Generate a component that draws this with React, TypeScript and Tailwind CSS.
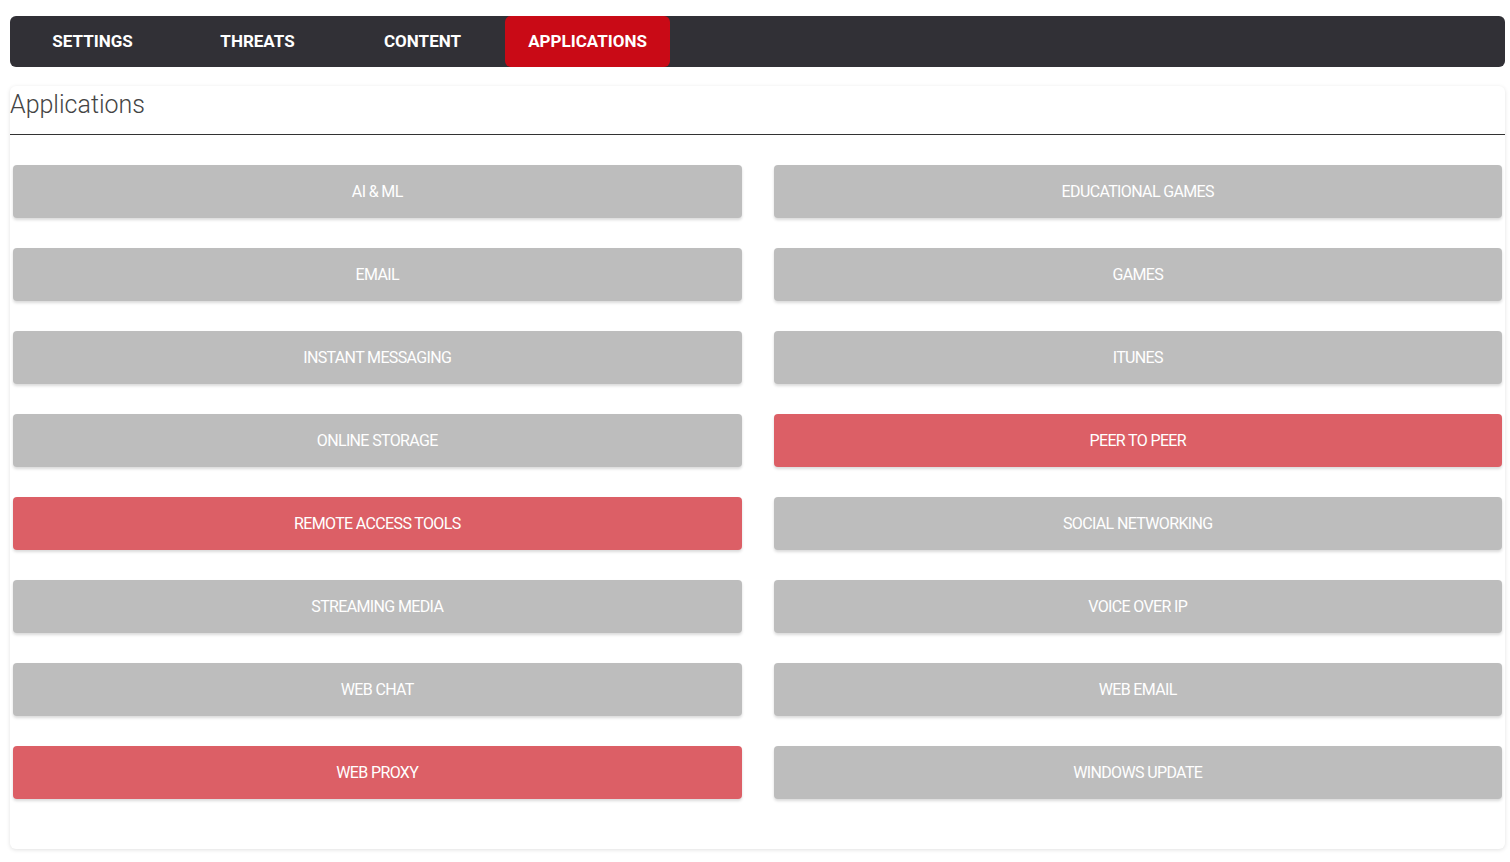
const tabs = ['SETTINGS', 'THREATS', 'CONTENT', 'APPLICATIONS'];

const apps: [string, boolean][] = [
  ['AI & ML', false],
  ['EDUCATIONAL GAMES', false],
  ['EMAIL', false],
  ['GAMES', false],
  ['INSTANT MESSAGING', false],
  ['ITUNES', false],
  ['ONLINE STORAGE', false],
  ['PEER TO PEER', true],
  ['REMOTE ACCESS TOOLS', true],
  ['SOCIAL NETWORKING', false],
  ['STREAMING MEDIA', false],
  ['VOICE OVER IP', false],
  ['WEB CHAT', false],
  ['WEB EMAIL', false],
  ['WEB PROXY', true],
  ['WINDOWS UPDATE', false],
];

export default function App() {
  return (
    <div className="min-h-screen bg-white pt-4 pl-[10px] pr-[5px]" style={{ fontFamily: 'Roboto, "Liberation Sans", sans-serif' }}>
      <nav className="flex h-[51px] rounded-md bg-[#313036]">
        {tabs.map((t) => (
          <div
            key={t}
            className={`flex w-[165px] items-center justify-center rounded-md text-[17px] font-bold text-white ${
              t === 'APPLICATIONS' ? 'bg-[#c90a16]' : ''
            }`}
          >
            {t}
          </div>
        ))}
      </nav>
      <div className="mt-[19px] h-[763px] rounded-md bg-white shadow-[0_1px_4px_rgba(0,0,0,0.12)]">
        <h2 className="border-b border-[#333] pb-[10px] text-[25px] font-light leading-[38px] text-[#444]">Applications</h2>
        <div className="grid grid-cols-2 gap-x-[32px] gap-y-[30px] px-[3px] pt-[30px] pr-[3px]">
          {apps.map(([name, blocked]) => (
            <div
              key={name}
              className={`flex h-[53px] items-center justify-center rounded text-[16px] tracking-[-0.04em] text-white shadow-[0_2px_3px_rgba(0,0,0,0.15)] ${
                blocked ? 'bg-[#dc5f66]' : 'bg-[#bdbdbd]'
              }`}
            >
              {name}
            </div>
          ))}
        </div>
      </div>
    </div>
  );
}
